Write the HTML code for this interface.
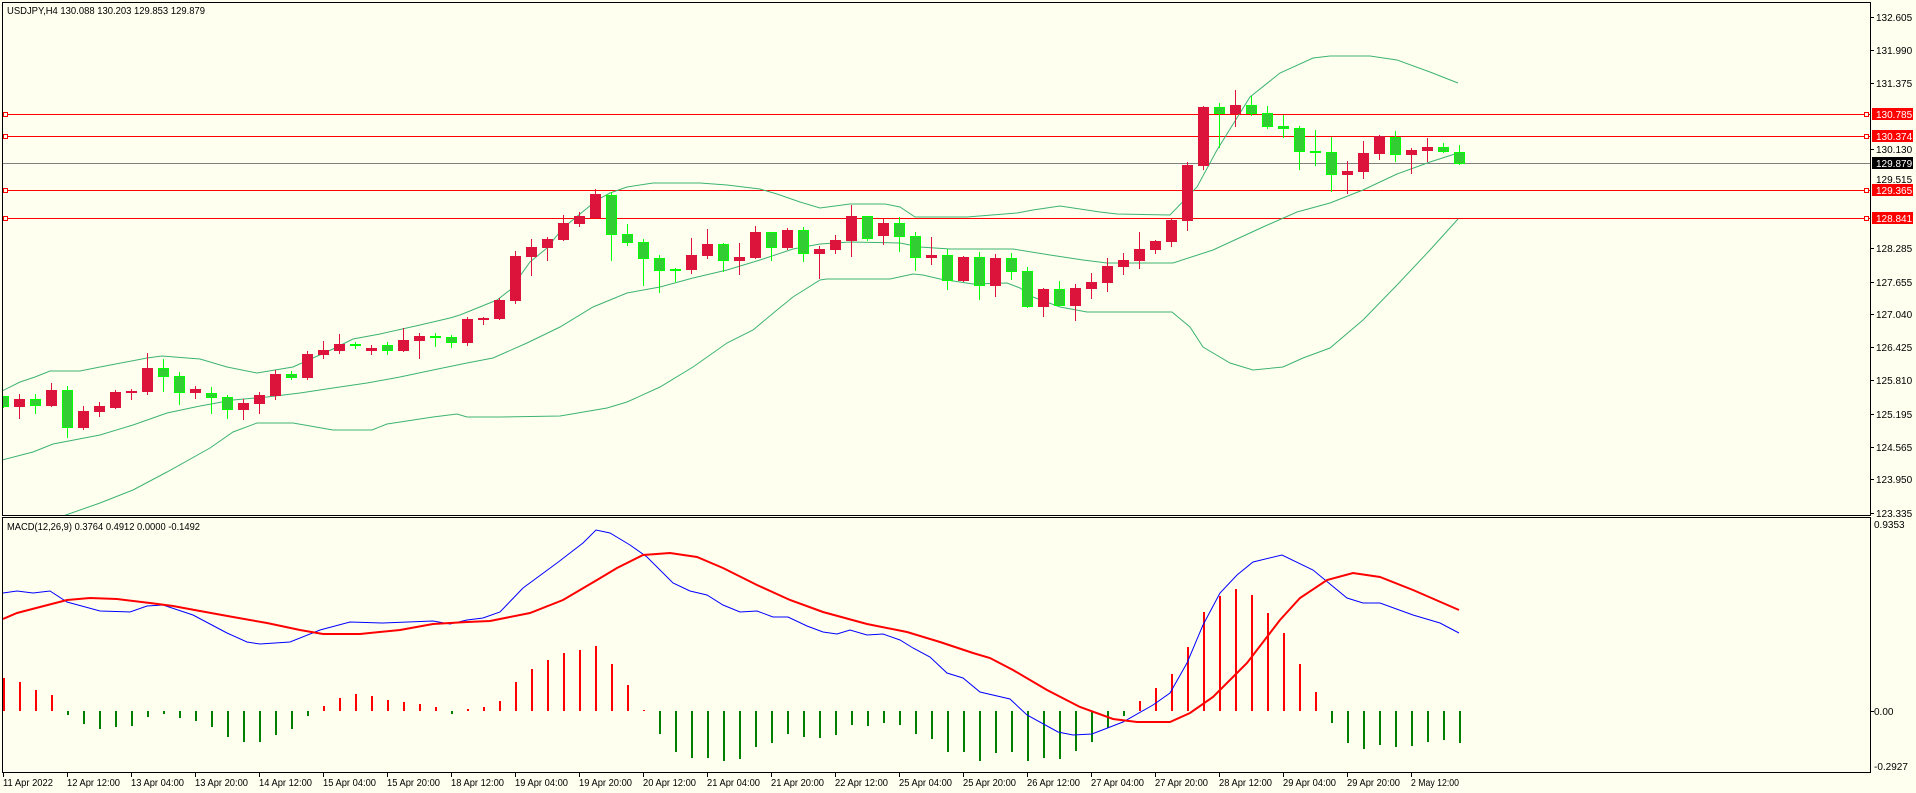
<!DOCTYPE html>
<html><head><meta charset="utf-8"><style>
html,body{margin:0;padding:0;background:#fffff0;width:1916px;height:793px;overflow:hidden}
svg{display:block}
text{font-family:"Liberation Sans",Tahoma,sans-serif;font-size:10px;fill:#000}
text.w{fill:#fff}
</style></head><body>
<svg width="1916" height="793" viewBox="0 0 1916 793" xmlns="http://www.w3.org/2000/svg">
<defs>
<clipPath id="cm"><rect x="3" y="3" width="1867" height="512"/></clipPath>
<clipPath id="cd"><rect x="3" y="518" width="1867" height="254"/></clipPath>
</defs>
<rect width="1916" height="793" fill="#fffff0"/>

<g clip-path="url(#cm)">
<g stroke="#ff0000" stroke-width="1" fill="none" shape-rendering="crispEdges">
<line x1="2" y1="114.5" x2="1870" y2="114.5"/>
<line x1="2" y1="136.5" x2="1870" y2="136.5"/>
<line x1="2" y1="190.5" x2="1870" y2="190.5"/>
<line x1="2" y1="218.5" x2="1870" y2="218.5"/>
<rect x="3.5" y="112.5" width="4" height="4" fill="#fffff0"/>
<rect x="3.5" y="134.5" width="4" height="4" fill="#fffff0"/>
<rect x="3.5" y="188.5" width="4" height="4" fill="#fffff0"/>
<rect x="3.5" y="216.5" width="4" height="4" fill="#fffff0"/>
<rect x="1864.5" y="112.5" width="4" height="4" fill="#fffff0"/>
<rect x="1864.5" y="134.5" width="4" height="4" fill="#fffff0"/>
<rect x="1864.5" y="188.5" width="4" height="4" fill="#fffff0"/>
<rect x="1864.5" y="216.5" width="4" height="4" fill="#fffff0"/>
</g>
<line x1="2" y1="163.5" x2="1870" y2="163.5" stroke="#808080" stroke-width="1" shape-rendering="crispEdges"/>

<g stroke="#3cb371" stroke-width="1" fill="none">
<polyline points="2,391 20,382 35,377 50,371 80,371 100,367 147,358 162,356 187,358 200,359 227,367 257,373 293,367 333,349 353,339 380,334 420,325 450,318 460,315 497,300 510,290 530,262 547,248 563,228 580,214 597,200 610,193 627,187 653,183 700,183 727,185 760,189 777,194 800,202 820,208 850,204 885,204 900,207 915,217 967,217 1017,213 1033,210 1060,206 1100,212 1117,214 1170,215 1197,187 1217,150 1250,97 1280,73 1313,58 1330,56 1370,56 1397,60 1430,72 1458,83"/>
<polyline points="2,460 33,452 53,444 100,435 133,425 167,413 200,406 233,400 267,397 300,393 333,388 367,383 400,377 433,370 467,363 493,358 527,343 560,327 593,307 627,293 660,287 693,278 727,270 760,260 793,249 820,244 850,242 900,243 920,247 950,249 1013,249 1050,255 1083,260 1107,263 1173,263 1213,250 1263,227 1297,212 1330,203 1363,190 1397,174 1430,162 1458,153"/>
<polyline points="60,517 63,516 100,503 133,490 167,472 210,448 233,432 257,423 293,423 333,430 372,430 387,424 433,417 457,414 467,417 500,417 560,416 607,408 627,402 660,387 693,367 727,343 753,330 777,310 793,297 820,280 827,279 890,279 913,274 923,275 940,279 973,284 1007,283 1020,288 1033,297 1060,307 1087,312 1172,312 1190,327 1203,347 1230,363 1253,370 1283,367 1303,358 1330,348 1363,320 1397,285 1430,250 1458,219"/>
</g>

<g shape-rendering="crispEdges">
<g fill="#dc143c">
<rect x="19" y="394" width="1" height="25"/><rect x="14" y="399" width="11" height="8"/>
<rect x="51" y="383" width="1" height="24"/><rect x="46" y="390" width="11" height="16"/>
<rect x="83" y="406" width="1" height="24"/><rect x="78" y="411" width="11" height="17"/>
<rect x="99" y="402" width="1" height="15"/><rect x="94" y="406" width="11" height="6"/>
<rect x="115" y="390" width="1" height="19"/><rect x="110" y="392" width="11" height="16"/>
<rect x="131" y="389" width="1" height="11"/><rect x="126" y="391" width="11" height="2"/>
<rect x="147" y="353" width="1" height="42"/><rect x="142" y="368" width="11" height="24"/>
<rect x="195" y="386" width="1" height="13"/><rect x="190" y="389" width="11" height="4"/>
<rect x="243" y="399" width="1" height="21"/><rect x="238" y="403" width="11" height="7"/>
<rect x="259" y="392" width="1" height="22"/><rect x="254" y="395" width="11" height="9"/>
<rect x="275" y="370" width="1" height="30"/><rect x="270" y="374" width="11" height="22"/>
<rect x="307" y="351" width="1" height="29"/><rect x="302" y="354" width="11" height="24"/>
<rect x="323" y="341" width="1" height="18"/><rect x="318" y="350" width="11" height="5"/>
<rect x="339" y="334" width="1" height="20"/><rect x="334" y="344" width="11" height="7"/>
<rect x="371" y="345" width="1" height="10"/><rect x="366" y="348" width="11" height="3"/>
<rect x="403" y="328" width="1" height="24"/><rect x="398" y="340" width="11" height="11"/>
<rect x="419" y="333" width="1" height="26"/><rect x="414" y="336" width="11" height="5"/>
<rect x="467" y="317" width="1" height="29"/><rect x="462" y="319" width="11" height="24"/>
<rect x="483" y="317" width="1" height="8"/><rect x="478" y="318" width="11" height="2"/>
<rect x="499" y="298" width="1" height="22"/><rect x="494" y="300" width="11" height="19"/>
<rect x="515" y="251" width="1" height="53"/><rect x="510" y="256" width="11" height="45"/>
<rect x="531" y="239" width="1" height="37"/><rect x="526" y="247" width="11" height="10"/>
<rect x="547" y="237" width="1" height="24"/><rect x="542" y="239" width="11" height="9"/>
<rect x="563" y="215" width="1" height="26"/><rect x="558" y="223" width="11" height="17"/>
<rect x="579" y="212" width="1" height="15"/><rect x="574" y="216" width="11" height="8"/>
<rect x="595" y="189" width="1" height="30"/><rect x="590" y="194" width="11" height="24"/>
<rect x="691" y="238" width="1" height="36"/><rect x="686" y="255" width="11" height="15"/>
<rect x="707" y="229" width="1" height="30"/><rect x="702" y="244" width="11" height="12"/>
<rect x="739" y="243" width="1" height="32"/><rect x="734" y="257" width="11" height="4"/>
<rect x="755" y="226" width="1" height="33"/><rect x="750" y="232" width="11" height="26"/>
<rect x="787" y="228" width="1" height="22"/><rect x="782" y="230" width="11" height="18"/>
<rect x="819" y="246" width="1" height="33"/><rect x="814" y="249" width="11" height="5"/>
<rect x="835" y="235" width="1" height="19"/><rect x="830" y="240" width="11" height="10"/>
<rect x="851" y="205" width="1" height="52"/><rect x="846" y="216" width="11" height="25"/>
<rect x="883" y="219" width="1" height="26"/><rect x="878" y="223" width="11" height="13"/>
<rect x="931" y="237" width="1" height="28"/><rect x="926" y="255" width="11" height="3"/>
<rect x="963" y="256" width="1" height="26"/><rect x="958" y="257" width="11" height="24"/>
<rect x="995" y="254" width="1" height="43"/><rect x="990" y="258" width="11" height="28"/>
<rect x="1043" y="288" width="1" height="29"/><rect x="1038" y="289" width="11" height="18"/>
<rect x="1075" y="284" width="1" height="37"/><rect x="1070" y="288" width="11" height="18"/>
<rect x="1091" y="273" width="1" height="26"/><rect x="1086" y="282" width="11" height="7"/>
<rect x="1107" y="258" width="1" height="34"/><rect x="1102" y="266" width="11" height="17"/>
<rect x="1123" y="253" width="1" height="22"/><rect x="1118" y="260" width="11" height="7"/>
<rect x="1139" y="232" width="1" height="37"/><rect x="1134" y="249" width="11" height="12"/>
<rect x="1155" y="240" width="1" height="14"/><rect x="1150" y="241" width="11" height="9"/>
<rect x="1171" y="219" width="1" height="28"/><rect x="1166" y="220" width="11" height="22"/>
<rect x="1187" y="162" width="1" height="69"/><rect x="1182" y="165" width="11" height="56"/>
<rect x="1203" y="106" width="1" height="64"/><rect x="1198" y="107" width="11" height="59"/>
<rect x="1235" y="90" width="1" height="37"/><rect x="1230" y="105" width="11" height="9"/>
<rect x="1347" y="161" width="1" height="33"/><rect x="1342" y="171" width="11" height="4"/>
<rect x="1363" y="141" width="1" height="38"/><rect x="1358" y="153" width="11" height="19"/>
<rect x="1379" y="135" width="1" height="25"/><rect x="1374" y="136" width="11" height="18"/>
<rect x="1411" y="148" width="1" height="26"/><rect x="1406" y="150" width="11" height="5"/>
<rect x="1427" y="138" width="1" height="24"/><rect x="1422" y="147" width="11" height="4"/>
</g>
<g fill="#00ff00">
<rect x="3" y="396" width="1" height="12"/>
<rect x="35" y="394" width="1" height="20"/>
<rect x="67" y="386" width="1" height="52"/>
<rect x="163" y="359" width="1" height="33"/>
<rect x="179" y="372" width="1" height="33"/>
<rect x="211" y="387" width="1" height="27"/>
<rect x="227" y="395" width="1" height="24"/>
<rect x="291" y="371" width="1" height="9"/>
<rect x="355" y="342" width="1" height="7"/>
<rect x="387" y="342" width="1" height="13"/>
<rect x="435" y="333" width="1" height="14"/>
<rect x="451" y="335" width="1" height="13"/>
<rect x="611" y="192" width="1" height="69"/>
<rect x="627" y="224" width="1" height="22"/>
<rect x="643" y="239" width="1" height="47"/>
<rect x="659" y="255" width="1" height="38"/>
<rect x="675" y="268" width="1" height="14"/>
<rect x="723" y="243" width="1" height="29"/>
<rect x="771" y="232" width="1" height="29"/>
<rect x="803" y="227" width="1" height="35"/>
<rect x="867" y="216" width="1" height="25"/>
<rect x="899" y="217" width="1" height="35"/>
<rect x="915" y="232" width="1" height="39"/>
<rect x="947" y="249" width="1" height="41"/>
<rect x="979" y="252" width="1" height="48"/>
<rect x="1011" y="253" width="1" height="27"/>
<rect x="1027" y="267" width="1" height="41"/>
<rect x="1059" y="281" width="1" height="25"/>
<rect x="1219" y="103" width="1" height="45"/>
<rect x="1251" y="96" width="1" height="20"/>
<rect x="1267" y="106" width="1" height="23"/>
<rect x="1283" y="115" width="1" height="23"/>
<rect x="1299" y="126" width="1" height="44"/>
<rect x="1315" y="130" width="1" height="36"/>
<rect x="1331" y="137" width="1" height="55"/>
<rect x="1395" y="131" width="1" height="31"/>
<rect x="1443" y="143" width="1" height="10"/>
<rect x="1459" y="145" width="1" height="20"/>
</g>
<g fill="#32cd32" stroke="#00ff00" stroke-width="1">
<rect x="-1.5" y="396.5" width="10" height="10"/>
<rect x="30.5" y="399.5" width="10" height="6"/>
<rect x="62.5" y="390.5" width="10" height="37"/>
<rect x="158.5" y="368.5" width="10" height="8"/>
<rect x="174.5" y="376.5" width="10" height="16"/>
<rect x="206.5" y="393.5" width="10" height="4"/>
<rect x="222.5" y="397.5" width="10" height="12"/>
<rect x="286.5" y="374.5" width="10" height="3"/>
<rect x="350.5" y="344.5" width="10" height="1"/>
<rect x="382.5" y="345.5" width="10" height="5"/>
<rect x="430.5" y="336.5" width="10" height="1"/>
<rect x="446.5" y="337.5" width="10" height="5"/>
<rect x="606.5" y="195.5" width="10" height="39"/>
<rect x="622.5" y="234.5" width="10" height="8"/>
<rect x="638.5" y="242.5" width="10" height="16"/>
<rect x="654.5" y="258.5" width="10" height="12"/>
<rect x="670.5" y="269.5" width="10" height="1"/>
<rect x="718.5" y="244.5" width="10" height="16"/>
<rect x="766.5" y="232.5" width="10" height="15"/>
<rect x="798.5" y="230.5" width="10" height="23"/>
<rect x="862.5" y="216.5" width="10" height="22"/>
<rect x="894.5" y="223.5" width="10" height="13"/>
<rect x="910.5" y="236.5" width="10" height="21"/>
<rect x="942.5" y="255.5" width="10" height="25"/>
<rect x="974.5" y="257.5" width="10" height="28"/>
<rect x="1006.5" y="258.5" width="10" height="13"/>
<rect x="1022.5" y="271.5" width="10" height="35"/>
<rect x="1054.5" y="289.5" width="10" height="16"/>
<rect x="1214.5" y="107.5" width="10" height="6"/>
<rect x="1246.5" y="105.5" width="10" height="8"/>
<rect x="1262.5" y="113.5" width="10" height="13"/>
<rect x="1278.5" y="126.5" width="10" height="2"/>
<rect x="1294.5" y="128.5" width="10" height="23"/>
<rect x="1310.5" y="151.5" width="10" height="1"/>
<rect x="1326.5" y="152.5" width="10" height="22"/>
<rect x="1390.5" y="137.5" width="10" height="17"/>
<rect x="1438.5" y="147.5" width="10" height="4"/>
<rect x="1454.5" y="152.5" width="10" height="11"/>
</g>
</g>
</g>

<text x="7" y="14" textLength="198" lengthAdjust="spacingAndGlyphs">USDJPY,H4  130.088 130.203 129.853 129.879</text>

<g clip-path="url(#cd)">
<g shape-rendering="crispEdges">
<g fill="#ff0000">
<rect x="3" y="678" width="2" height="33"/><rect x="19" y="682" width="2" height="29"/><rect x="35" y="690" width="2" height="21"/><rect x="51" y="695" width="2" height="16"/>
<rect x="323" y="706" width="2" height="5"/><rect x="339" y="698" width="2" height="13"/><rect x="355" y="694" width="2" height="17"/><rect x="371" y="696" width="2" height="15"/><rect x="387" y="700" width="2" height="11"/><rect x="403" y="702" width="2" height="9"/><rect x="419" y="704" width="2" height="7"/><rect x="435" y="707" width="2" height="4"/>
<rect x="467" y="709" width="2" height="2"/><rect x="483" y="707" width="2" height="4"/><rect x="499" y="701" width="2" height="10"/><rect x="515" y="682" width="2" height="29"/><rect x="531" y="669" width="2" height="42"/><rect x="547" y="660" width="2" height="51"/><rect x="563" y="653" width="2" height="58"/><rect x="579" y="650" width="2" height="61"/><rect x="595" y="646" width="2" height="65"/><rect x="611" y="664" width="2" height="47"/><rect x="627" y="685" width="2" height="26"/><rect x="643" y="710" width="2" height="1"/>
<rect x="1139" y="701" width="2" height="10"/><rect x="1155" y="688" width="2" height="23"/><rect x="1171" y="674" width="2" height="37"/><rect x="1187" y="647" width="2" height="64"/><rect x="1203" y="612" width="2" height="99"/><rect x="1219" y="596" width="2" height="115"/><rect x="1235" y="589" width="2" height="122"/><rect x="1251" y="595" width="2" height="116"/><rect x="1267" y="613" width="2" height="98"/><rect x="1283" y="633" width="2" height="78"/><rect x="1299" y="664" width="2" height="47"/><rect x="1315" y="692" width="2" height="19"/>
</g>
<g fill="#008000">
<rect x="67" y="711" width="2" height="4"/><rect x="83" y="711" width="2" height="13"/><rect x="99" y="711" width="2" height="18"/><rect x="115" y="711" width="2" height="16"/><rect x="131" y="711" width="2" height="15"/><rect x="147" y="711" width="2" height="6"/><rect x="163" y="711" width="2" height="3"/><rect x="179" y="711" width="2" height="7"/><rect x="195" y="711" width="2" height="10"/><rect x="211" y="711" width="2" height="16"/><rect x="227" y="711" width="2" height="26"/><rect x="243" y="711" width="2" height="31"/><rect x="259" y="711" width="2" height="31"/><rect x="275" y="711" width="2" height="24"/><rect x="291" y="711" width="2" height="18"/><rect x="307" y="711" width="2" height="5"/>
<rect x="451" y="711" width="2" height="3"/>
<rect x="659" y="711" width="2" height="23"/><rect x="675" y="711" width="2" height="41"/><rect x="691" y="711" width="2" height="47"/><rect x="707" y="711" width="2" height="47"/><rect x="723" y="711" width="2" height="50"/><rect x="739" y="711" width="2" height="48"/><rect x="755" y="711" width="2" height="36"/><rect x="771" y="711" width="2" height="32"/><rect x="787" y="711" width="2" height="23"/><rect x="803" y="711" width="2" height="26"/><rect x="819" y="711" width="2" height="27"/><rect x="835" y="711" width="2" height="24"/><rect x="851" y="711" width="2" height="14"/><rect x="867" y="711" width="2" height="15"/><rect x="883" y="711" width="2" height="12"/><rect x="899" y="711" width="2" height="14"/><rect x="915" y="711" width="2" height="23"/><rect x="931" y="711" width="2" height="28"/><rect x="947" y="711" width="2" height="41"/><rect x="963" y="711" width="2" height="41"/><rect x="979" y="711" width="2" height="50"/><rect x="995" y="711" width="2" height="42"/><rect x="1011" y="711" width="2" height="41"/><rect x="1027" y="711" width="2" height="50"/><rect x="1043" y="711" width="2" height="47"/><rect x="1059" y="711" width="2" height="48"/><rect x="1075" y="711" width="2" height="40"/><rect x="1091" y="711" width="2" height="31"/><rect x="1107" y="711" width="2" height="17"/><rect x="1123" y="711" width="2" height="5"/>
<rect x="1331" y="711" width="2" height="12"/><rect x="1347" y="711" width="2" height="32"/><rect x="1363" y="711" width="2" height="38"/><rect x="1379" y="711" width="2" height="34"/><rect x="1395" y="711" width="2" height="36"/><rect x="1411" y="711" width="2" height="35"/><rect x="1427" y="711" width="2" height="31"/><rect x="1443" y="711" width="2" height="29"/><rect x="1459" y="711" width="2" height="32"/>
</g>
</g>
<polyline fill="none" stroke="#0000ff" stroke-width="1" points="3,593 17,591 33,593 50,591 67,602 100,611 130,612 147,606 163,605 193,615 227,633 247,642 260,644 290,642 320,630 350,622 383,623 433,621 450,624 467,620 483,618 500,612 523,588 557,563 583,543 596,530 610,533 630,545 647,557 673,583 690,591 707,595 723,605 740,612 757,611 773,617 788,617 807,626 823,632 837,634 850,630 867,635 883,634 900,640 913,648 930,657 947,673 963,678 980,692 1010,699 1027,715 1058,732 1073,735 1092,734 1123,722 1153,705 1170,693 1187,663 1203,625 1220,593 1237,575 1253,562 1282,555 1313,570 1347,598 1363,603 1380,603 1413,615 1440,623 1459,633"/>
<polyline fill="none" stroke="#ff0000" stroke-width="2" points="3,619 17,613 40,607 67,600 90,598 117,599 150,603 173,606 200,611 233,617 267,623 300,630 323,634 360,634 400,630 433,624 467,622 490,621 530,613 563,600 597,580 617,568 643,555 670,553 697,557 723,568 757,585 790,600 823,612 867,624 907,632 940,642 973,653 990,658 1013,670 1047,690 1080,707 1113,719 1137,722 1170,722 1190,713 1213,697 1247,663 1280,620 1300,598 1327,580 1353,573 1380,577 1413,590 1459,610"/>
</g>
<text x="7" y="530" textLength="193" lengthAdjust="spacingAndGlyphs">MACD(12,26,9) 0.3764 0.4912 0.0000 -0.1492</text>

<g fill="none" stroke="#000" stroke-width="1" shape-rendering="crispEdges">
<rect x="2.5" y="2.5" width="1868" height="513"/>
<rect x="2.5" y="517.5" width="1868" height="255"/>
</g>

<g stroke="#000" stroke-width="1" shape-rendering="crispEdges">
<line x1="1870" y1="17.5" x2="1874" y2="17.5"/><line x1="1870" y1="50.5" x2="1874" y2="50.5"/><line x1="1870" y1="83.5" x2="1874" y2="83.5"/><line x1="1870" y1="149.5" x2="1874" y2="149.5"/><line x1="1870" y1="248.5" x2="1874" y2="248.5"/><line x1="1870" y1="282.5" x2="1874" y2="282.5"/><line x1="1870" y1="314.5" x2="1874" y2="314.5"/><line x1="1870" y1="347.5" x2="1874" y2="347.5"/><line x1="1870" y1="380.5" x2="1874" y2="380.5"/><line x1="1870" y1="414.5" x2="1874" y2="414.5"/><line x1="1870" y1="447.5" x2="1874" y2="447.5"/><line x1="1870" y1="479.5" x2="1874" y2="479.5"/><line x1="1870" y1="513.5" x2="1874" y2="513.5"/>
<line x1="1870" y1="711.5" x2="1874" y2="711.5"/>
</g>
<g font-size="10">
<text x="1876" y="21">132.605</text>
<text x="1876" y="54">131.990</text>
<text x="1876" y="87">131.375</text>
<text x="1876" y="153">130.130</text>
<text x="1876" y="183">129.515</text>
<text x="1876" y="252">128.285</text>
<text x="1876" y="286">127.655</text>
<text x="1876" y="318">127.040</text>
<text x="1876" y="351">126.425</text>
<text x="1876" y="384">125.810</text>
<text x="1876" y="418">125.195</text>
<text x="1876" y="451">124.565</text>
<text x="1876" y="483">123.950</text>
<text x="1876" y="517">123.335</text>
<text x="1874" y="528">0.9353</text>
<text x="1874" y="715">0.00</text>
<text x="1874" y="770">-0.2927</text>
</g>
<rect x="1872" y="108" width="41" height="12" fill="#ff0000"/>
<rect x="1872" y="130" width="41" height="12" fill="#ff0000"/>
<rect x="1872" y="157" width="41" height="12" fill="#000"/>
<rect x="1872" y="184" width="41" height="12" fill="#ff0000"/>
<rect x="1872" y="212" width="41" height="12" fill="#ff0000"/>
<text class="w" x="1876" y="118" style="fill:#fff">130.785</text>
<text class="w" x="1876" y="140" style="fill:#fff">130.374</text>
<text class="w" x="1876" y="167" style="fill:#fff">129.879</text>
<text class="w" x="1876" y="194" style="fill:#fff">129.365</text>
<text class="w" x="1876" y="222" style="fill:#fff">128.841</text>

<g stroke="#000" stroke-width="1" shape-rendering="crispEdges">
<line x1="3.5" y1="772" x2="3.5" y2="777"/><line x1="67.5" y1="772" x2="67.5" y2="777"/><line x1="131.5" y1="772" x2="131.5" y2="777"/><line x1="195.5" y1="772" x2="195.5" y2="777"/><line x1="259.5" y1="772" x2="259.5" y2="777"/><line x1="323.5" y1="772" x2="323.5" y2="777"/><line x1="387.5" y1="772" x2="387.5" y2="777"/><line x1="451.5" y1="772" x2="451.5" y2="777"/><line x1="515.5" y1="772" x2="515.5" y2="777"/><line x1="579.5" y1="772" x2="579.5" y2="777"/><line x1="643.5" y1="772" x2="643.5" y2="777"/><line x1="707.5" y1="772" x2="707.5" y2="777"/><line x1="771.5" y1="772" x2="771.5" y2="777"/><line x1="835.5" y1="772" x2="835.5" y2="777"/><line x1="899.5" y1="772" x2="899.5" y2="777"/><line x1="963.5" y1="772" x2="963.5" y2="777"/><line x1="1027.5" y1="772" x2="1027.5" y2="777"/><line x1="1091.5" y1="772" x2="1091.5" y2="777"/><line x1="1155.5" y1="772" x2="1155.5" y2="777"/><line x1="1219.5" y1="772" x2="1219.5" y2="777"/><line x1="1283.5" y1="772" x2="1283.5" y2="777"/><line x1="1347.5" y1="772" x2="1347.5" y2="777"/><line x1="1411.5" y1="772" x2="1411.5" y2="777"/>
</g>
<g font-size="10">
<text x="3" y="786" textLength="50" lengthAdjust="spacingAndGlyphs">11 Apr 2022</text>
<text x="67" y="786" textLength="53" lengthAdjust="spacingAndGlyphs">12 Apr 12:00</text>
<text x="131" y="786" textLength="53" lengthAdjust="spacingAndGlyphs">13 Apr 04:00</text>
<text x="195" y="786" textLength="53" lengthAdjust="spacingAndGlyphs">13 Apr 20:00</text>
<text x="259" y="786" textLength="53" lengthAdjust="spacingAndGlyphs">14 Apr 12:00</text>
<text x="323" y="786" textLength="53" lengthAdjust="spacingAndGlyphs">15 Apr 04:00</text>
<text x="387" y="786" textLength="53" lengthAdjust="spacingAndGlyphs">15 Apr 20:00</text>
<text x="451" y="786" textLength="53" lengthAdjust="spacingAndGlyphs">18 Apr 12:00</text>
<text x="515" y="786" textLength="53" lengthAdjust="spacingAndGlyphs">19 Apr 04:00</text>
<text x="579" y="786" textLength="53" lengthAdjust="spacingAndGlyphs">19 Apr 20:00</text>
<text x="643" y="786" textLength="53" lengthAdjust="spacingAndGlyphs">20 Apr 12:00</text>
<text x="707" y="786" textLength="53" lengthAdjust="spacingAndGlyphs">21 Apr 04:00</text>
<text x="771" y="786" textLength="53" lengthAdjust="spacingAndGlyphs">21 Apr 20:00</text>
<text x="835" y="786" textLength="53" lengthAdjust="spacingAndGlyphs">22 Apr 12:00</text>
<text x="899" y="786" textLength="53" lengthAdjust="spacingAndGlyphs">25 Apr 04:00</text>
<text x="963" y="786" textLength="53" lengthAdjust="spacingAndGlyphs">25 Apr 20:00</text>
<text x="1027" y="786" textLength="53" lengthAdjust="spacingAndGlyphs">26 Apr 12:00</text>
<text x="1091" y="786" textLength="53" lengthAdjust="spacingAndGlyphs">27 Apr 04:00</text>
<text x="1155" y="786" textLength="53" lengthAdjust="spacingAndGlyphs">27 Apr 20:00</text>
<text x="1219" y="786" textLength="53" lengthAdjust="spacingAndGlyphs">28 Apr 12:00</text>
<text x="1283" y="786" textLength="53" lengthAdjust="spacingAndGlyphs">29 Apr 04:00</text>
<text x="1347" y="786" textLength="53" lengthAdjust="spacingAndGlyphs">29 Apr 20:00</text>
<text x="1411" y="786" textLength="48" lengthAdjust="spacingAndGlyphs">2 May 12:00</text>
</g>
</svg>
</body></html>
